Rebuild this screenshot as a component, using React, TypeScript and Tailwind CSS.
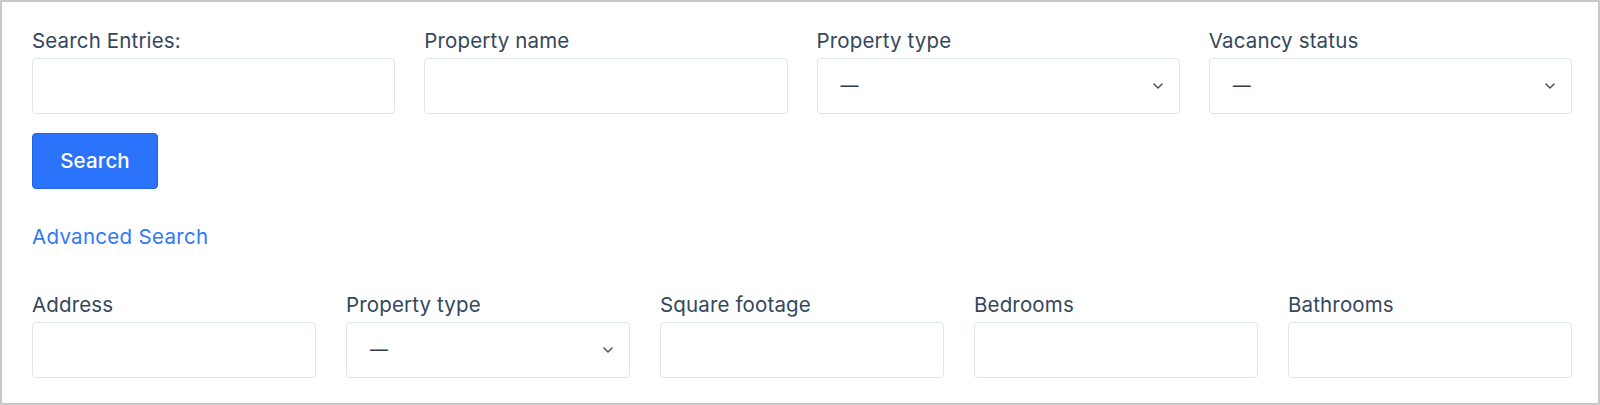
const labelCls = "block text-[20.5px] leading-[24px] tracking-[0.15px] text-[#34475b]";
const inputCls =
  "block w-full h-[56px] rounded-[4px] border border-[#dfe5ec] bg-white px-4 text-[20px] text-[#2c3e50] outline-none";

function Field({ label, className = "" }: { label: string; className?: string }) {
  return (
    <div className={className}>
      <label className={labelCls}>{label}</label>
      <input type="text" className={`${inputCls} mt-[5px]`} />
    </div>
  );
}

function SelectField({ label, className = "" }: { label: string; className?: string }) {
  return (
    <div className={className}>
      <label className={labelCls}>{label}</label>
      <div className={`${inputCls} mt-[5px] flex items-center justify-between pl-[23px] pr-[16px]`}>
        <span className="text-[18px] leading-none text-[#2c3e50]">—</span>
        <svg width="10" height="6" viewBox="0 0 10 6" fill="none" aria-hidden="true">
          <path d="M1 1l4 4 4-4" stroke="#3d4b5c" strokeWidth="1.4" strokeLinecap="round" strokeLinejoin="round" />
        </svg>
      </div>
    </div>
  );
}

export default function App() {
  return (
    <div
      className="box-border h-[405px] w-full border-2 border-[#c8c8c8] bg-white pl-[30px] pt-[27px]"
      style={{ fontFamily: "Inter, 'Noto Sans', 'Liberation Sans', sans-serif" }}
    >
      <div className="w-[1540px]">
        <div className="grid grid-cols-4 gap-x-[29px]">
          <Field label="Search Entries:" />
          <Field label="Property name" />
          <SelectField label="Property type" />
          <SelectField label="Vacancy status" />
        </div>

        <button
          type="button"
          className="mt-[19px] h-[56px] w-[126px] rounded-[4px] border border-[#1f63e6] bg-[#2b73fb] text-[20.5px] font-medium tracking-[0.15px] text-white"
        >
          Search
        </button>

        <a
          href="#"
          className="mt-[36px] block w-fit text-[20.5px] leading-[24px] tracking-[0.3px] text-[#2f78f8]"
        >
          Advanced Search
        </a>

        <div className="mt-[44px] grid grid-cols-5 gap-x-[30px]">
          <Field label="Address" />
          <SelectField label="Property type" />
          <Field label="Square footage" />
          <Field label="Bedrooms" />
          <Field label="Bathrooms" />
        </div>
      </div>
    </div>
  );
}
